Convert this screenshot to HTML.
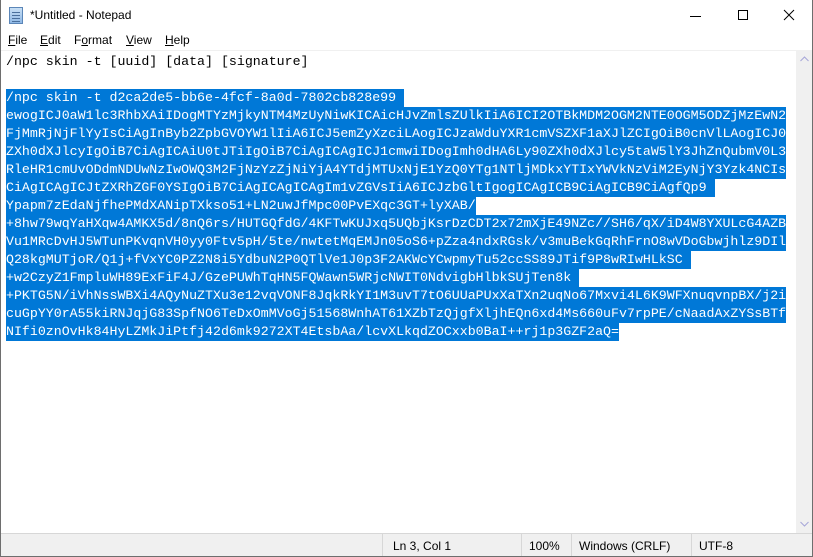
<!DOCTYPE html>
<html><head><meta charset="utf-8">
<style>
*{margin:0;padding:0;box-sizing:border-box}
body{width:813px;height:557px;overflow:hidden;background:#fff;font-family:"Liberation Sans",sans-serif;position:relative}
.win{position:absolute;inset:0;border:1px solid #6e6e6e;border-top:none}
.title{position:absolute;left:0;top:0;width:813px;height:31px;background:#fff}
.title .t{position:absolute;left:30px;top:8px;font-size:12px;color:#000}
.icon{position:absolute;left:9px;top:7px;width:14px;height:17px;background:linear-gradient(#c8dff5,#8fb8e6);border:1px solid #5b86b8}
.icon:before{content:"";position:absolute;left:2px;right:2px;top:4px;height:1px;background:#4a6f9c;box-shadow:0 3px 0 #4a6f9c,0 6px 0 #4a6f9c,0 9px 0 #4a6f9c}
.menu{position:absolute;top:32px;left:0;height:18px;font-size:12px}
.menu span{position:absolute;top:1px}
.edit{position:absolute;left:1px;top:50px;width:795px;height:483px;border-top:1px solid #f0f0f0;background:#fff}
.text{position:absolute;left:5px;top:2px;font-family:"Liberation Mono",monospace;font-size:13.28px;line-height:18px;white-space:pre;color:#000}
.text div{height:18px}
.text span{display:inline-block;height:18px;background:#0078d7;color:#fff}
.sb{position:absolute;left:796px;top:50px;width:16px;height:483px;background:#f0f0f0}
.status{position:absolute;left:1px;top:533px;width:811px;height:23px;background:#f0f0f0;border-top:1px solid #d7d7d7;font-size:12px}
.status .s{position:absolute;top:5px}
.sep{position:absolute;top:0;width:1px;height:23px;background:#d7d7d7}
</style></head><body>
<div class="title"><div class="icon"></div><div class="t">*Untitled - Notepad</div>
<svg style="position:absolute;left:690px;top:10px" width="12" height="12"><line x1="0" y1="6.5" x2="11" y2="6.5" stroke="#000"/></svg>
<svg style="position:absolute;left:737px;top:9px" width="12" height="12"><rect x="1.5" y="1.5" width="9" height="9" fill="none" stroke="#000"/></svg>
<svg style="position:absolute;left:783px;top:9px" width="12" height="12"><path d="M1 1L11 11M11 1L1 11" stroke="#000"/></svg>
</div>
<div class="menu">
<span style="left:8px"><u>F</u>ile</span><span style="left:40px"><u>E</u>dit</span><span style="left:74px">F<u>o</u>rmat</span><span style="left:126px"><u>V</u>iew</span><span style="left:165px"><u>H</u>elp</span>
</div>
<div class="edit"><div class="text"><div>/npc skin -t [uuid] [data] [signature]</div><div> </div><div><span>/npc skin -t d2ca2de5-bb6e-4fcf-8a0d-7802cb828e99 </span></div><div><span>ewogICJ0aW1lc3RhbXAiIDogMTYzMjkyNTM4MzUyNiwKICAicHJvZmlsZUlkIiA6ICI2OTBkMDM2OGM2NTE0OGM5ODZjMzEwN2</span></div><div><span>FjMmRjNjFlYyIsCiAgInByb2ZpbGVOYW1lIiA6ICJ5emZyXzciLAogICJzaWduYXR1cmVSZXF1aXJlZCIgOiB0cnVlLAogICJ0</span></div><div><span>ZXh0dXJlcyIgOiB7CiAgICAiU0tJTiIgOiB7CiAgICAgICJ1cmwiIDogImh0dHA6Ly90ZXh0dXJlcy5taW5lY3JhZnQubmV0L3</span></div><div><span>RleHR1cmUvODdmNDUwNzIwOWQ3M2FjNzYzZjNiYjA4YTdjMTUxNjE1YzQ0YTg1NTljMDkxYTIxYWVkNzViM2EyNjY3Yzk4NCIs</span></div><div><span>CiAgICAgICJtZXRhZGF0YSIgOiB7CiAgICAgICAgIm1vZGVsIiA6ICJzbGltIgogICAgICB9CiAgICB9CiAgfQp9 </span></div><div><span>Ypapm7zEdaNjfhePMdXANipTXkso51+LN2uwJfMpc00PvEXqc3GT+lyXAB/</span></div><div><span>+8hw79wqYaHXqw4AMKX5d/8nQ6rs/HUTGQfdG/4KFTwKUJxq5UQbjKsrDzCDT2x72mXjE49NZc//SH6/qX/iD4W8YXULcG4AZB</span></div><div><span>Vu1MRcDvHJ5WTunPKvqnVH0yy0Ftv5pH/5te/nwtetMqEMJn05oS6+pZza4ndxRGsk/v3muBekGqRhFrnO8wVDoGbwjhlz9DIl</span></div><div><span>Q28kgMUTjoR/Q1j+fVxYC0PZ2N8i5YdbuN2P0QTlVe1J0p3F2AKWcYCwpmyTu52ccSS89JTif9P8wRIwHLkSC </span></div><div><span>+w2CzyZ1FmpluWH89ExFiF4J/GzePUWhTqHN5FQWawn5WRjcNWIT0NdvigbHlbkSUjTen8k </span></div><div><span>+PKTG5N/iVhNssWBXi4AQyNuZTXu3e12vqVONF8JqkRkYI1M3uvT7tO6UUaPUxXaTXn2uqNo67Mxvi4L6K9WFXnuqvnpBX/j2i</span></div><div><span>cuGpYY0rA55kiRNJqjG83SpfNO6TeDxOmMVoGj51568WnhAT61XZbTzQjgfXljhEQn6xd4Ms660uFv7rpPE/cNaadAxZYSsBTf</span></div><div><span>NIfi0znOvHk84HyLZMkJiPtfj42d6mk9272XT4EtsbAa/lcvXLkqdZOCxxb0BaI++rj1p3GZF2aQ=</span></div></div></div>
<div class="sb">
<svg style="position:absolute;left:4px;top:6px" width="9" height="6"><path d="M0.5 5L4.5 1L8.5 5" fill="none" stroke="#a6a6d8"/></svg>
<svg style="position:absolute;left:4px;top:471px" width="9" height="6"><path d="M0.5 1L4.5 5L8.5 1" fill="none" stroke="#a6a6d8"/></svg>
</div>
<div class="status">
<div class="sep" style="left:381px"></div><div class="sep" style="left:520px"></div><div class="sep" style="left:570px"></div><div class="sep" style="left:690px"></div>
<span class="s" style="left:392px">Ln 3, Col 1</span><span class="s" style="left:528px">100%</span><span class="s" style="left:578px">Windows (CRLF)</span><span class="s" style="left:698px">UTF-8</span>
</div>
<div class="win"></div>
</body></html>
